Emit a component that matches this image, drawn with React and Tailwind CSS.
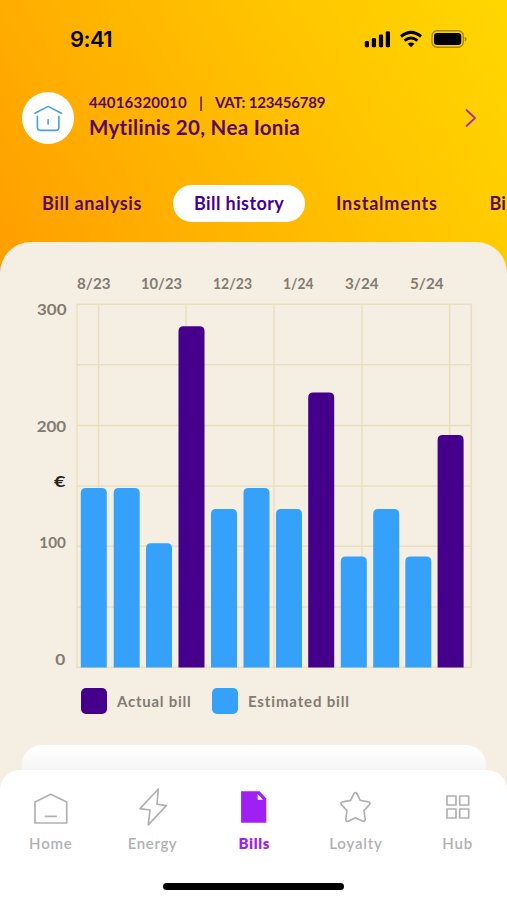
import React from 'react';

const bars = [
  { x: 80.8, top: 488, actual: false },
  { x: 113.7, top: 488, actual: false },
  { x: 146, top: 543.3, actual: false },
  { x: 178.5, top: 326.3, actual: true },
  { x: 211, top: 509, actual: false },
  { x: 243.5, top: 488, actual: false },
  { x: 276, top: 509, actual: false },
  { x: 308.2, top: 392.5, actual: true },
  { x: 340.8, top: 556.5, actual: false },
  { x: 373.2, top: 509, actual: false },
  { x: 405.3, top: 556.5, actual: false },
  { x: 437.6, top: 435, actual: true },
];

const months = [
  { label: '8/23', x: 77, w: 33.5 },
  { label: '10/23', x: 141, w: 41 },
  { label: '12/23', x: 213, w: 39 },
  { label: '1/24', x: 283, w: 30.5 },
  { label: '3/24', x: 345, w: 33.5 },
  { label: '5/24', x: 410, w: 33.5 },
];

const amounts = [
  { label: '300', x: 37, y: 314.8, w: 29.5 },
  { label: '200', x: 36.7, y: 431.6, w: 29.5 },
  { label: '100', x: 39.3, y: 548.4, w: 26.5 },
  { label: '0', x: 55.3, y: 664.8, w: 10 },
];

const BOTTOM = 667.4;

const barPath = ({ x, top }) =>
  `M${x} ${BOTTOM}V${top + 5}q0-5 5-5h16q5 0 5 5V${BOTTOM}z`;

const BillChart = () => (
  <svg className="block h-[433px] w-full shrink-0" viewBox="0 242 507 433">
    <g stroke="#eadfbd" strokeWidth="1.5" fill="none">
      <rect x="77" y="304.3" width="394.3" height="363" />
      {[98.6, 186, 274, 362, 449.6].map((x) => (
        <path key={x} d={`M${x} 304V667`} />
      ))}
      {[364.8, 425.5, 486, 546.3, 607].map((y) => (
        <path key={y} d={`M77 ${y}H471`} />
      ))}
    </g>
    {bars.map((bar) => (
      <path key={bar.x} d={barPath(bar)} fill={bar.actual ? '#45008b' : '#35a1fa'} />
    ))}
    <g className="font-['Lato'] text-[15px] font-bold" fill="#827b72">
      {months.map((m) => (
        <text key={m.label} x={m.x} y="288.8" textLength={m.w} lengthAdjust="spacingAndGlyphs">{m.label}</text>
      ))}
      {amounts.map((a) => (
        <text key={a.label} x={a.x} y={a.y} textLength={a.w} lengthAdjust="spacingAndGlyphs">{a.label}</text>
      ))}
      <text x="54" y="487.3" textLength="11.5" lengthAdjust="spacingAndGlyphs" fill="#26221e">€</text>
    </g>
  </svg>
);

const StatusBar = () => (
  <div className="flex h-[78px] justify-between pl-[70px] pr-[40px]">
    <span className="mt-[24px] font-['Inter'] text-[22px] leading-[30px] font-semibold tracking-[-0.6px] text-black">9:41</span>
    <svg className="mt-[28px] h-[24px] w-[104px]" viewBox="363 28 104 24">
      <rect x="364.8" y="41" width="4.2" height="6.3" rx="1.2" />
      <rect x="371.8" y="38" width="4.2" height="9.3" rx="1.2" />
      <rect x="378.9" y="34.6" width="4.2" height="12.7" rx="1.2" />
      <rect x="385.8" y="31.2" width="4.2" height="16.1" rx="1.2" />
      <g fill="none" stroke="#000" strokeWidth="3">
        <path d="M401 36.5Q411 28.2 421 36.5" />
        <path d="M404.6 40.7Q411 35.3 417.4 40.7" />
      </g>
      <path d="M407.6 43.8Q411 41 414.4 43.8L411 47.3z" />
      <rect x="432" y="30.8" width="31.3" height="16.4" rx="5" fill="none" stroke="#000" strokeOpacity=".35" strokeWidth="1.4" />
      <rect x="434" y="33" width="27.3" height="12" rx="3.2" />
      <path d="M464.7 36.8q2 1 2 2.3t-2 2.3z" fillOpacity=".4" />
    </svg>
  </div>
);

const AccountRow = () => (
  <div className="flex h-[80px] items-center pl-[22px] pr-[29px]">
    <div className="flex size-[52px] shrink-0 items-center justify-center rounded-full bg-white">
      <svg className="size-[30px]" viewBox="32.6 102.6 30 30" fill="none" stroke="#459fe6" strokeWidth="1.6" strokeLinecap="round" strokeLinejoin="round">
        <path d="M34.5 112.8L47.7 106L61 112.8" />
        <path d="M37 116V126.5Q37 130 40.5 130H55Q58.5 130 58.5 126.5V116" />
        <path d="M47.7 119.3V123.7" />
      </svg>
    </div>
    <div className="ml-[15px] mb-[7px] font-['Lato'] font-bold text-[#560b5f]">
      <p className="flex text-[15px] leading-[24px]">
        <span className="w-[110px] tracking-[0.2px]">44016320010</span>
        <span className="w-[16px]">|</span>
        <span className="tracking-[-0.2px] whitespace-nowrap">VAT: 123456789</span>
      </p>
      <p className="text-[20.5px] leading-[26px] tracking-[0.3px] whitespace-nowrap">Mytilinis 20, Nea Ionia</p>
    </div>
    <svg className="ml-auto h-[22px] w-[14px]" viewBox="464 107 14 22" fill="none" stroke="#a8329c" strokeWidth="1.8" strokeLinecap="round" strokeLinejoin="round">
      <path d="M466.5 110L475 118L466.5 126" />
    </svg>
  </div>
);

const Tabs = () => (
  <div className="flex h-[84px] items-start pt-[27px] font-['Lato'] text-[18px] leading-[36px] font-bold tracking-[0.6px] whitespace-nowrap text-[#560b5f]">
    <span className="ml-[42px] w-[131px] shrink-0">Bill analysis</span>
    <span className="h-[36.5px] w-[132px] shrink-0 rounded-full bg-white pl-[21px] tracking-[0.4px] text-[#480091]">Bill history</span>
    <span className="ml-[31px] w-[153.5px] shrink-0 tracking-[0.8px]">Instalments</span>
    <span className="tracking-normal">Bi</span>
  </div>
);

const iconProps = {
  className: 'h-[42px] w-[48px]',
  fill: 'none',
  stroke: '#b1b1b1',
  strokeWidth: 1.7,
  strokeLinejoin: 'round',
  strokeLinecap: 'round',
};

const navItems = [
  {
    label: 'Home',
    tracking: 'tracking-[0.8px]',
    icon: (
      <svg {...iconProps} viewBox="26.6 786 48 42">
        <path d="M34.6 802L50.3 794.3L66.3 802V823H34.6z" />
        <path d="M45 816.3H55.7" />
      </svg>
    ),
  },
  {
    label: 'Energy',
    tracking: 'tracking-[0.6px]',
    icon: (
      <svg {...iconProps} viewBox="128 786 48 42">
        <path d="M157.3 789L139 808.6L149 810L147.3 824.8L165.3 805.6L156 804.2z" />
      </svg>
    ),
  },
  {
    label: 'Bills',
    tracking: 'tracking-[0.6px]',
    active: true,
    icon: (
      <svg className="h-[42px] w-[48px]" viewBox="230.2 786 48 42">
        <path d="M241.3 791.3H259.8L266.5 798.5V822.7H241.3z" fill="#a01ff2" />
        <path d="M257.8 794V799.7H263.2z" fill="#fff" />
      </svg>
    ),
  },
  {
    label: 'Loyalty',
    tracking: 'tracking-[0.8px]',
    icon: (
      <svg {...iconProps} viewBox="332.3 786 48 42">
        <path d="M354.3 793.5Q355.8 791.5 357.2 793.5L360.6 800.4L368.6 801.8Q371.2 802.7 369.8 804.6L364.2 810.6L365.5 819Q365.6 822 363 821.3L355.8 817.8L348.6 821.3Q345.8 822 346.1 819L347.3 810.6L341.7 804.6Q340.3 802.7 343 801.8L350.9 800.4z" />
      </svg>
    ),
  },
  {
    label: 'Hub',
    tracking: 'tracking-[0.8px]',
    icon: (
      <svg {...iconProps} viewBox="434 786 48 42">
        <rect x="447" y="796" width="9" height="9" />
        <rect x="459.7" y="796" width="9" height="9" />
        <rect x="447" y="809" width="9" height="9" />
        <rect x="459.7" y="809" width="9" height="9" />
      </svg>
    ),
  },
];

const BottomNav = () => (
  <nav className="relative -mt-[30px] h-[130px] shrink-0 overflow-hidden rounded-t-[20px] bg-white">
    <div className="flex pt-[16px]">
      {navItems.map((item) => (
        <div key={item.label} className="flex w-[101.7px] shrink-0 flex-col items-center">
          {item.icon}
          <span
            className={`mt-[5px] font-['Lato'] text-[15px] leading-[20px] ${item.tracking} ${item.active ? 'font-extrabold text-[#a01ff2]' : 'font-semibold text-[#b1b1b1]'}`}
          >
            {item.label}
          </span>
        </div>
      ))}
    </div>
    <div className="mx-auto mt-[30px] h-[6.5px] w-[181px] rounded-full bg-black" />
  </nav>
);

const App = () => {
  return (
    <div className="flex h-[900px] w-[507px] flex-col overflow-hidden bg-[#f5eee3]">
      {/* Header */}
      <header className="h-[275px] shrink-0 bg-[linear-gradient(58deg,#ff9d00_0%,#ffb300_35%,#ffc800_70%,#ffd700_100%)]">
        <StatusBar />
        <AccountRow />
        <Tabs />
      </header>

      {/* Bill history */}
      <main className="-mt-[33px] flex h-[558px] shrink-0 flex-col rounded-t-[31px] bg-[#f5eee3]">
        <BillChart />
        <div className="mt-[13px] flex shrink-0 items-center pl-[81px] font-['Lato'] text-[15px] leading-[26px] font-bold text-[#827b72]">
          <span className="size-[26px] rounded-[5px] bg-[#45008b]" />
          <span className="ml-[10px] w-[95px] tracking-[0.75px]">Actual bill</span>
          <span className="size-[26px] rounded-[5px] bg-[#35a1fa]" />
          <span className="ml-[10px] tracking-[0.85px]">Estimated bill</span>
        </div>
        <div className="ml-[22px] mr-[21px] mt-[31px] h-[55px] shrink-0 rounded-t-[20px] bg-[linear-gradient(#fff_0,#fdfdfd_8px,#f4f4f4_26px)]" />
      </main>

      <BottomNav />
    </div>
  );
};

export default App;
